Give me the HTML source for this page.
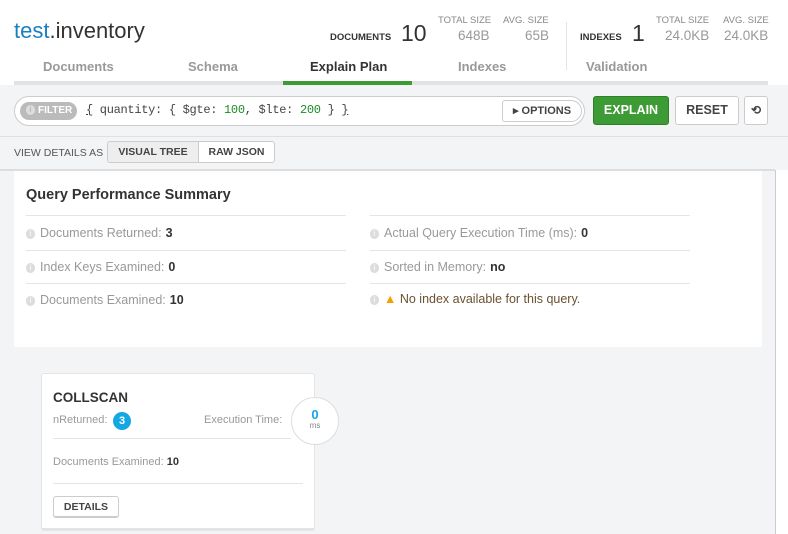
<!DOCTYPE html>
<html><head><style>
*{box-sizing:border-box;margin:0;padding:0}
body{width:788px;height:534px;overflow:hidden;background:#f3f4f5;font-family:"Liberation Sans",sans-serif;position:relative;color:#333}
.a{position:absolute;white-space:nowrap}
.hdr{left:0;top:0;width:788px;height:85px;background:#fff}
.lbl{font-size:9.5px;color:#888;text-transform:uppercase}
.val{font-size:13.5px;color:#999}
.tab{font-size:13px;color:#999;top:59px;font-weight:bold}
.info{display:inline-block;width:9px;height:10px;border-radius:5px;background:#ddd;color:#fff;font-size:8px;text-align:center;line-height:10px;vertical-align:1px;margin-right:5px}
.row{font-size:12.5px;color:#999}
.row b{color:#333;margin-left:4px}
.ln{height:1px;background:#e4e4e4}
.btn{border:1px solid #ccc;border-radius:3px;background:#fff;font-weight:bold;font-size:12px;color:#444;text-align:center}
</style></head><body>
<div class="a hdr"></div>
<div class="a" style="left:14px;top:18px;font-size:22px;color:#333"><span style="color:#1a7fc1">test</span>.inventory</div>
<div class="a" style="left:330px;top:32px;font-size:9.5px;font-weight:bold;color:#333">DOCUMENTS</div>
<div class="a" style="left:401px;top:20px;font-size:23px;color:#333">10</div>
<div class="a lbl" style="left:438px;top:15px">TOTAL SIZE</div>
<div class="a val" style="left:458px;top:28px">648B</div>
<div class="a lbl" style="left:503px;top:15px">AVG. SIZE</div>
<div class="a val" style="left:525px;top:28px">65B</div>
<div class="a" style="left:566px;top:22px;width:1px;height:48px;background:#e4e4e4"></div>
<div class="a" style="left:580px;top:32px;font-size:9.5px;font-weight:bold;color:#333">INDEXES</div>
<div class="a" style="left:632px;top:20px;font-size:23px;color:#333">1</div>
<div class="a lbl" style="left:656px;top:15px">TOTAL SIZE</div>
<div class="a val" style="left:665px;top:28px">24.0KB</div>
<div class="a lbl" style="left:723px;top:15px">AVG. SIZE</div>
<div class="a val" style="left:724px;top:28px">24.0KB</div>
<div class="a tab" style="left:43px">Documents</div>
<div class="a tab" style="left:188px">Schema</div>
<div class="a tab" style="left:310px;color:#333">Explain Plan</div>
<div class="a tab" style="left:458px">Indexes</div>
<div class="a tab" style="left:586px">Validation</div>
<div class="a" style="left:14px;top:81px;width:754px;height:4px;background:#e2e2e2"></div>
<div class="a" style="left:283px;top:81px;width:129px;height:4px;background:#3d9b35"></div>
<div class="a" style="left:0;top:85px;width:788px;height:52px;background:#f3f4f5;border-bottom:1px solid #e0e0e0"></div>
<div class="a" style="left:14px;top:96px;width:571px;height:30px;background:#fff;border:1px solid #ccc;border-radius:15px"></div>
<div class="a" style="left:20px;top:102px;width:57px;height:18px;border-radius:9px;background:#bbb;color:#fff;font-size:10px;font-weight:bold;line-height:18px;padding-left:6px"><span class="info" style="background:#ddd;color:#bbb;margin-right:3px">i</span>FILTER</div>
<div class="a" style="left:86px;top:103px;font-family:'Liberation Mono',monospace;font-size:12px;color:#444;letter-spacing:-0.3px"><u>{</u> quantity: { $gte: <span style="color:#1b8c2a">100</span>, $lte: <span style="color:#1b8c2a">200</span> } <u>}</u></div>
<div class="a btn" style="left:502px;top:100px;width:80px;height:22px;line-height:20px;font-size:11px;border-radius:3px 11px 11px 3px">▸ OPTIONS</div>
<div class="a" style="left:593px;top:96px;width:76px;height:29px;background:#3d9b35;border:1px solid #2f7f28;border-radius:3px;color:#fff;font-weight:bold;font-size:12.5px;text-align:center;line-height:27px">EXPLAIN</div>
<div class="a btn" style="left:675px;top:96px;width:64px;height:29px;line-height:27px;font-size:12.5px">RESET</div>
<div class="a btn" style="left:744px;top:96px;width:24px;height:29px;line-height:27px">⟲</div>
<div class="a" style="left:14px;top:147px;font-size:10.5px;color:#555">VIEW DETAILS AS</div>
<div class="a btn" style="left:107px;top:141px;width:92px;height:22px;line-height:20px;font-size:10.5px;background:#eee;border-radius:3px 0 0 3px">VISUAL TREE</div>
<div class="a btn" style="left:198px;top:141px;width:77px;height:22px;line-height:20px;font-size:10.5px;border-radius:0 3px 3px 0">RAW JSON</div>
<div class="a" style="left:0;top:169px;width:775px;height:2px;background:#ddd"></div>
<div class="a" style="left:775px;top:170px;width:13px;height:364px;background:#fff;border-left:1px solid #ccc"></div>
<div class="a" style="left:14px;top:171px;width:748px;height:176px;background:#fff"></div>
<div class="a" style="left:26px;top:187px;font-size:14.5px;font-weight:bold;color:#333">Query Performance Summary</div>
<div class="a ln" style="left:26px;top:215px;width:320px"></div>
<div class="a ln" style="left:26px;top:250px;width:320px"></div>
<div class="a ln" style="left:26px;top:283px;width:320px"></div>
<div class="a ln" style="left:370px;top:215px;width:320px"></div>
<div class="a ln" style="left:370px;top:250px;width:320px"></div>
<div class="a ln" style="left:370px;top:283px;width:320px"></div>
<div class="a row" style="left:26px;top:226px"><span class="info">i</span>Documents Returned:<b>3</b></div>
<div class="a row" style="left:26px;top:260px"><span class="info">i</span>Index Keys Examined:<b>0</b></div>
<div class="a row" style="left:26px;top:293px"><span class="info">i</span>Documents Examined:<b>10</b></div>
<div class="a row" style="left:370px;top:226px"><span class="info">i</span>Actual Query Execution Time (ms):<b>0</b></div>
<div class="a row" style="left:370px;top:260px"><span class="info">i</span>Sorted in Memory:<b>no</b></div>
<div class="a row" style="left:370px;top:292px;color:#6b5132"><span class="info">i</span><span style="color:#f5a000">▲</span> No index available for this query.</div>
<div class="a" style="left:41px;top:373px;width:274px;height:158px;background:#fff;border:1px solid #e4e4e4;border-radius:3px;border-bottom:3px solid #e4e4e4"></div>
<div class="a" style="left:53px;top:390px;font-size:13.5px;font-weight:bold;color:#333">COLLSCAN</div>
<div class="a" style="left:53px;top:414px;font-size:11px;color:#999">nReturned:</div>
<div class="a" style="left:113px;top:412px;width:18px;height:18px;border-radius:9px;background:#13a8e2;color:#fff;font-size:11px;font-weight:bold;text-align:center;line-height:18px">3</div>
<div class="a" style="left:204px;top:414px;font-size:11px;color:#999">Execution Time:</div>
<div class="a" style="left:291px;top:397px;width:48px;height:48px;border-radius:24px;background:#fff;border:1px solid #ddd;text-align:center"><div style="color:#13a8e2;font-size:13px;font-weight:bold;margin-top:10px;line-height:13px">0</div><div style="font-size:8px;color:#888">ms</div></div>
<div class="a ln" style="left:53px;top:438px;width:238px"></div>
<div class="a" style="left:53px;top:456px;font-size:11px;color:#999">Documents Examined: <b style="color:#333">10</b></div>
<div class="a ln" style="left:53px;top:483px;width:250px"></div>
<div class="a btn" style="left:53px;top:496px;width:66px;height:22px;line-height:20px;font-size:10.5px;border-bottom:2px solid #ccc">DETAILS</div>
</body></html>
